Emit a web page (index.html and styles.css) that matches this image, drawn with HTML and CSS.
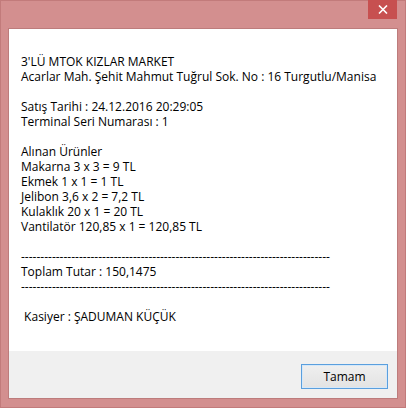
FILE: index.html
```
<!DOCTYPE html>
<html lang="tr">
<head>
<meta charset="utf-8">
<title>Fiş</title>
<link rel="stylesheet" href="styles.css">
</head>
<body>
<div class="window">
  <div class="titlebar">
    <button class="close" aria-label="Kapat">
      <svg width="10" height="9" viewBox="0 0 10 9"><path d="M1 0.5 L9 8.5 M9 0.5 L1 8.5" stroke="#fff" stroke-width="1.6" fill="none"/></svg>
    </button>
  </div>
  <div class="client">
    <div class="message"><p class="text">3'LÜ MTOK KIZLAR MARKET
Acarlar Mah. Şehit Mahmut Tuğrul Sok. No : 16 Turgutlu/Manisa

Satış Tarihi : 24.12.2016 20:29:05
Terminal Seri Numarası : 1

Alınan Ürünler
Makarna 3 x 3 = 9 TL
Ekmek 1 x 1 = 1 TL
Jelibon 3,6 x 2 = 7,2 TL
Kulaklık 20 x 1 = 20 TL
Vantilatör 120,85 x 1 = 120,85 TL

--------------------------------------------------------------------------------
Toplam Tutar : 150,1475
--------------------------------------------------------------------------------

 Kasiyer : ŞADUMAN KÜÇÜK</p></div>
    <div class="footer">
      <button class="ok">Tamam</button>
    </div>
  </div>
</div>
</body>
</html>
```
FILE: styles.css
```
* { box-sizing: border-box; }
html, body { margin: 0; padding: 0; }
body {
  width: 406px;
  height: 408px;
  background: #d38f8f;
  font-family: "Open Sans", "Noto Sans", sans-serif;
  font-size: 12px;
  color: #000;
}
.window {
  width: 406px;
  height: 408px;
  background: #d38f8f;
  border: 1px solid #c27b7b;
  padding: 0 7px 8px 7px;
  display: flex;
  flex-direction: column;
}
.titlebar {
  height: 27px;
  display: flex;
  justify-content: flex-end;
  align-items: flex-start;
}
.close {
  width: 29px;
  height: 19px;
  margin: -1px 1px 0 0;
  border: none;
  padding: 0;
  background: #c75050;
  display: flex;
  align-items: center;
  justify-content: center;
}
.client {
  flex: 1;
  border: 1px solid #bd7c7c;
  display: flex;
  flex-direction: column;
}
.message {
  height: 322px;
  background: #fff;
  padding: 25px 12px 0 12px;
}
.text {
  margin: 0;
  white-space: pre;
  line-height: 15px;
}
.footer {
  flex: 1;
  background: #f0f0f0;
  display: flex;
  justify-content: flex-end;
  align-items: flex-start;
  padding: 13px 9px 0 0;
}
.ok {
  width: 87px;
  height: 25px;
  border: 1px solid #5a9fde;
  box-shadow: inset 0 0 0 1px #d6e8f8;
  background: linear-gradient(#efefef, #e3e3e3);
  font-family: inherit;
  font-size: 12px;
  color: #000;
  padding: 0;
}
```
